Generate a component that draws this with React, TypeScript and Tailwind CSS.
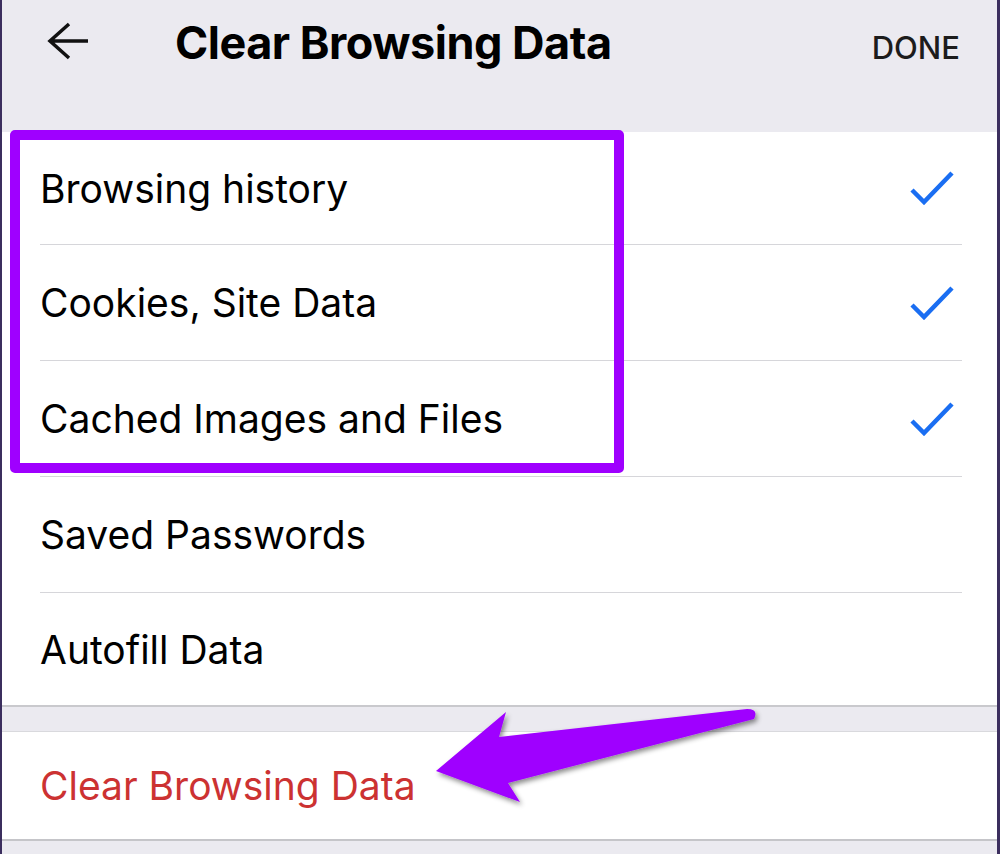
import React from "react";

const font = { fontFamily: "Inter, Roboto, 'Liberation Sans', sans-serif" };

function Check() {
  return (
    <svg width="44" height="34" viewBox="0 0 44 34" fill="none">
      <polyline points="2,19 14,31 42,2" stroke="#1a6ef2" strokeWidth="4.5" strokeLinecap="butt" strokeLinejoin="miter" />
    </svg>
  );
}

function Row({ label, checked, h }: { label: string; checked?: boolean; h: string }) {
  return (
    <div className={`flex items-center justify-between pl-[38px] pr-[43px] ${h}`}>
      <span className="text-[39px] text-black leading-none">{label}</span>
      {checked ? <Check /> : null}
    </div>
  );
}

function Sep() {
  return <div className="h-px bg-[#d6d6da] ml-[38px] w-[922px]" />;
}

export default function App() {
  return (
    <div style={font} className="relative w-[1000px] h-[854px] overflow-hidden bg-[#ebeaf0] border-l-2 border-r-[3px] border-[#3b2e5e]">
      <div className="flex items-start h-[132px]">
        <svg className="ml-[44px] mt-[21px]" width="44" height="40" viewBox="0 0 44 40" fill="none">
          <path d="M23 3 L4 20 L23 37 M4 20 L42 20" stroke="#111" strokeWidth="3.5" strokeLinecap="butt" strokeLinejoin="miter" />
        </svg>
        <div className="ml-[85px] mt-[20px] text-[45px] leading-[46px] font-bold text-black tracking-[-0.5px]">Clear Browsing Data</div>
        <div className="ml-auto mr-[37px] mt-[31px] text-[31px] leading-[33px] font-medium text-[#1c1c1c]">DONE</div>
      </div>
      <div className="bg-white border-b-2 border-[#c9c9cd]">
        <Row label="Browsing history" checked h="h-[112px]" />
        <Sep />
        <Row label="Cookies, Site Data" checked h="h-[115px]" />
        <Sep />
        <Row label="Cached Images and Files" checked h="h-[115px]" />
        <Sep />
        <Row label="Saved Passwords" h="h-[115px]" />
        <Sep />
        <Row label="Autofill Data" h="h-[112px]" />
      </div>
      <div className="h-[24px]" />
      <div className="bg-white border-t border-[#d9d9dd] border-b-2 border-b-[#c5c5c9] h-[110px] flex items-center pl-[38px]">
        <span className="text-[39px] leading-none text-[#cc3232]">Clear Browsing Data</span>
      </div>
      <div className="absolute left-[8px] top-[130px] w-[614px] h-[343px] border-[10px] border-[#9f00ff] rounded-[5px]" />
      <svg className="absolute left-0 top-0 pointer-events-none" width="1000" height="854" viewBox="0 0 1000 854">
        <defs>
          <filter id="sh" x="-10%" y="-30%" width="130%" height="160%">
            <feDropShadow dx="2" dy="3" stdDeviation="2.5" floodColor="#000" floodOpacity="0.45" />
          </filter>
        </defs>
        <path d="M434 771 L504 712 L497 737 L745 709 Q757 709 752 719 L506 783 L518 802 Z" fill="#9f00ff" filter="url(#sh)" />
      </svg>
    </div>
  );
}
